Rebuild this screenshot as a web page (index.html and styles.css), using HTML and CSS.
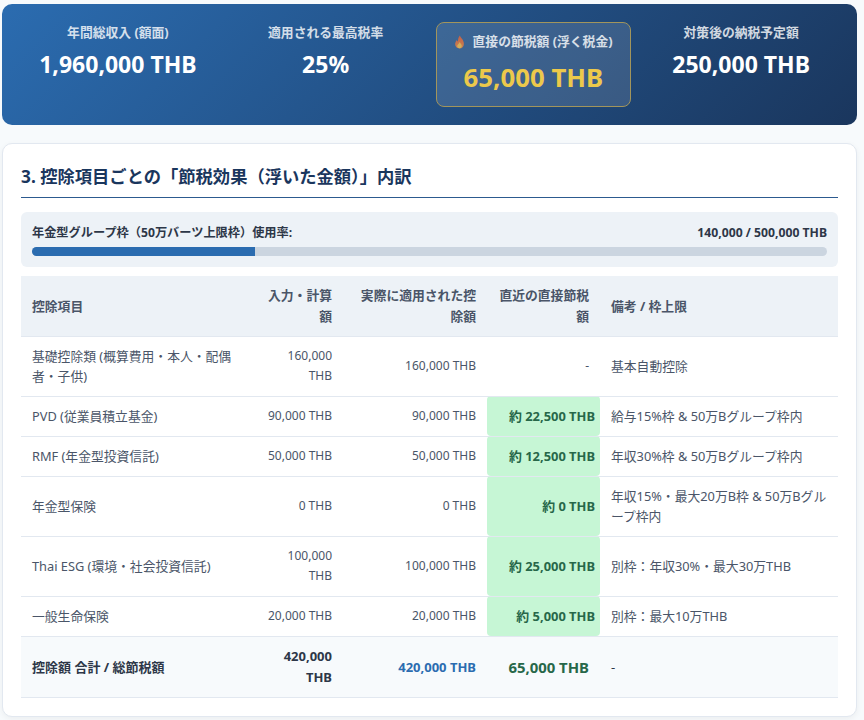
FILE: index.html
```html
<!DOCTYPE html>
<html lang="ja">
<head>
    <meta charset="UTF-8">
    <meta name="viewport" content="width=device-width, initial-scale=1.0">
    <title>節税シミュレーション</title>
    <link rel="stylesheet" href="styles.css">
</head>
<body>

    <div class="summary">
        <div class="stat">
            <div class="stat-label">年間総収入 (額面)</div>
            <div class="stat-value">1,960,000 THB</div>
        </div>
        <div class="stat">
            <div class="stat-label">適用される最高税率</div>
            <div class="stat-value">25%</div>
        </div>
        <div class="stat stat-highlight">
            <div class="stat-label">
                <svg class="flame" viewBox="0 0 12 16" width="11" height="14">
                    <defs>
                        <linearGradient id="flameFill" x1="0" y1="0" x2="0" y2="1">
                            <stop offset="0" stop-color="#e2603a"/>
                            <stop offset="1" stop-color="#f08a3c"/>
                        </linearGradient>
                    </defs>
                    <path d="M6.4 0.6C7 3 10.9 5.2 11 10C11 13.2 8.8 15.4 6 15.4C3.2 15.4 1 13.3 1 10.4C1 8.2 2.2 6.8 3 5.6C3.3 6.6 3.7 7.2 4.3 7.5C4.1 5 4.9 2.4 6.4 0.6Z" fill="url(#flameFill)"/>
                    <path d="M6.2 8C6.6 9.4 8.6 10.4 8.6 12.4C8.6 14 7.5 15.2 6 15.2C4.5 15.2 3.4 14.1 3.4 12.6C3.4 11 5.4 10 6.2 8Z" fill="#f8c24e"/>
                </svg>
                直接の節税額 (浮く税金)
            </div>
            <div class="stat-value">65,000 THB</div>
        </div>
        <div class="stat">
            <div class="stat-label">対策後の納税予定額</div>
            <div class="stat-value">250,000 THB</div>
        </div>
    </div>

    <div class="card">
        <h2>3. 控除項目ごとの「節税効果（浮いた金額）」内訳</h2>

        <div class="quota">
            <div class="quota-head">
                <span>年金型グループ枠（50万バーツ上限枠）使用率:</span>
                <span>140,000 / 500,000 THB</span>
            </div>
            <div class="quota-track">
                <div class="quota-fill" style="width: 28%"></div>
            </div>
        </div>

        <table>
            <colgroup>
                <col class="col-item">
                <col class="col-input">
                <col class="col-applied">
                <col class="col-saving">
                <col class="col-note">
            </colgroup>
            <thead>
                <tr>
                    <th>控除項目</th>
                    <th class="num">入力・計算額</th>
                    <th class="num">実際に適用された控除額</th>
                    <th class="num">直近の直接節税額</th>
                    <th>備考 / 枠上限</th>
                </tr>
            </thead>
            <tbody>
                <tr>
                    <td>基礎控除類 (概算費用・本人・配偶者・子供)</td>
                    <td class="num">160,000 THB</td>
                    <td class="num">160,000 THB</td>
                    <td class="num">-</td>
                    <td>基本自動控除</td>
                </tr>
                <tr>
                    <td>PVD (従業員積立基金)</td>
                    <td class="num">90,000 THB</td>
                    <td class="num">90,000 THB</td>
                    <td class="num saving">約 22,500 THB</td>
                    <td>給与15%枠 &amp; 50万Bグループ枠内</td>
                </tr>
                <tr>
                    <td>RMF (年金型投資信託)</td>
                    <td class="num">50,000 THB</td>
                    <td class="num">50,000 THB</td>
                    <td class="num saving">約 12,500 THB</td>
                    <td>年収30%枠 &amp; 50万Bグループ枠内</td>
                </tr>
                <tr>
                    <td>年金型保険</td>
                    <td class="num">0 THB</td>
                    <td class="num">0 THB</td>
                    <td class="num saving">約 0 THB</td>
                    <td>年収15%・最大20万B枠 &amp; 50万Bグループ枠内</td>
                </tr>
                <tr>
                    <td>Thai ESG (環境・社会投資信託)</td>
                    <td class="num">100,000 THB</td>
                    <td class="num">100,000 THB</td>
                    <td class="num saving">約 25,000 THB</td>
                    <td>別枠：年収30%・最大30万THB</td>
                </tr>
                <tr>
                    <td>一般生命保険</td>
                    <td class="num">20,000 THB</td>
                    <td class="num">20,000 THB</td>
                    <td class="num saving">約 5,000 THB</td>
                    <td>別枠：最大10万THB</td>
                </tr>
                <tr class="total">
                    <td>控除額 合計 / 総節税額</td>
                    <td class="num">420,000 THB</td>
                    <td class="num applied-total">420,000 THB</td>
                    <td class="num saving-total">65,000 THB</td>
                    <td class="note-total">-</td>
                </tr>
            </tbody>
        </table>
    </div>

</body>
</html>
```

FILE: styles.css
```css
body {
    font-family: "Noto Sans", "Noto Sans CJK JP", sans-serif;
    background-color: #f7fafc;
    color: #2d3748;
    margin: 0;
    padding: 4px 7px 4px 2px;
    line-height: 1.6;
}
.summary {
    display: grid;
    grid-template-columns: repeat(4, 1fr);
    gap: 12px;
    padding: 18px;
    border-radius: 10px;
    background: linear-gradient(135deg, #2b6cb0 0%, #1a365d 100%);
    color: #fff;
    text-align: center;
    margin-bottom: 18px;
}
.stat-label {
    font-size: 12.8px;
    font-weight: 700;
    opacity: 0.8;
    margin-bottom: 4px;
}
.stat-value {
    font-size: 23px;
    font-weight: 700;
}
.stat-highlight {
    background-color: rgba(255, 255, 255, 0.12);
    border: 1px solid #a2955c;
    border-radius: 8px;
    padding: 8px 4px 7px;
}
.stat-highlight .stat-label {
    margin-bottom: 6px;
}
.stat-highlight .stat-value {
    font-size: 25.8px;
    color: #ecc94b;
}
.flame {
    vertical-align: -3px;
    margin-right: 4px;
}
.card {
    background-color: #fff;
    border: 1px solid #e2e8f0;
    border-radius: 10px;
    box-shadow: 0 2px 6px rgba(0, 0, 0, 0.05);
    padding: 19px 18px 18px;
}
h2 {
    font-size: 17.3px;
    font-weight: 700;
    color: #1a365d;
    margin: 0 0 14px;
    padding-bottom: 6.5px;
    border-bottom: 1px solid #2c5a8f;
}
.quota {
    background-color: #edf2f7;
    border-radius: 6px;
    padding: 11px;
    margin-bottom: 9px;
}
.quota-head {
    display: flex;
    justify-content: space-between;
    font-size: 12.2px;
    font-weight: 700;
    margin-bottom: 4.5px;
}
.quota-track {
    height: 9px;
    background-color: #cbd5e0;
    border-radius: 5px;
    overflow: hidden;
}
.quota-fill {
    height: 100%;
    background-color: #2b6cb0;
}
table {
    width: 100%;
    table-layout: fixed;
    border-collapse: collapse;
}
.col-item { width: 236px; }
.col-input { width: 86px; }
.col-applied { width: 144px; }
.col-saving { width: 113px; }
.col-note { width: 238px; }
th, td {
    padding: 9.5px 11px;
    text-align: left;
    border-bottom: 1px solid #e2e8f0;
    font-size: 12.8px;
    line-height: 20px;
}
th {
    background-color: #edf2f7;
    color: #4a5568;
    font-weight: 700;
    line-height: 20.5px;
}
td {
    color: #4a5568;
}
td.num {
    text-align: right;
    font-size: 12px;
    padding-left: 7px;
}
th.num {
    text-align: right;
}
td.saving {
    background-color: #c6f6d5;
    color: #276749;
    font-weight: 700;
    font-size: 12.9px;
    border-radius: 4px;
    padding-right: 5px;
}
.total td, .total td.num {
    background-color: #f7fafc;
    color: #2d3748;
    font-weight: 700;
    font-size: 13px;
    line-height: 20.5px;
}
.total td.applied-total {
    color: #2b6cb0;
}
.total td.saving-total {
    color: #276749;
    font-size: 14.9px;
}
.total td.note-total {
    font-weight: 400;
}
```
